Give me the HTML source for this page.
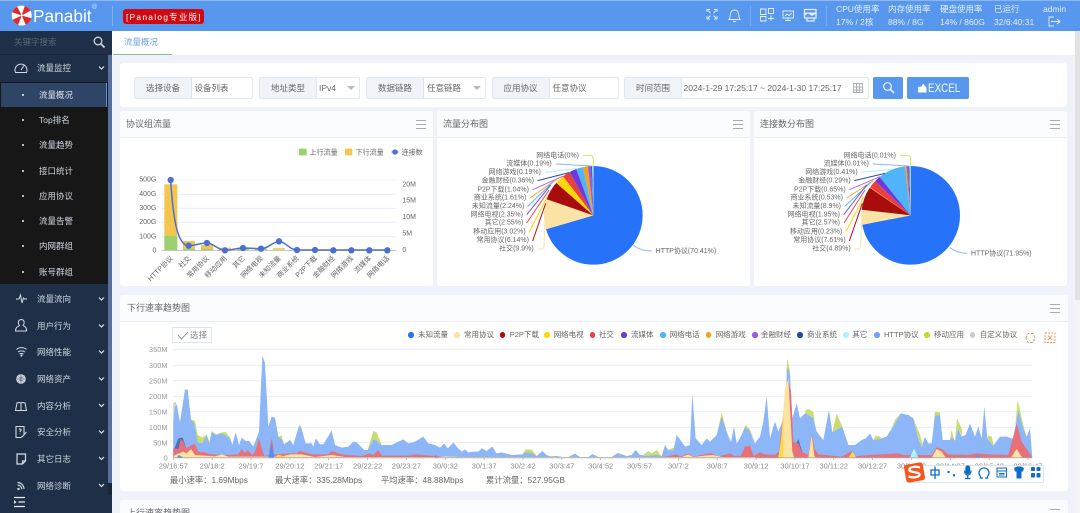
<!DOCTYPE html>
<html lang="zh">
<head>
<meta charset="utf-8">
<title>Panabit</title>
<style>
html,body{margin:0;padding:0;width:1080px;height:513px;overflow:hidden;background:#eff2f8}
body{font-family:"Liberation Sans","Noto Sans CJK SC",sans-serif;font-size:8.5px;color:#666}
#root{position:relative;width:1080px;height:513px;overflow:hidden;filter:blur(.35px)}
.a{position:absolute}
.t{position:absolute;white-space:nowrap;line-height:12px}
.card{position:absolute;background:#fff;border-radius:3px}
.hd{position:absolute;left:0;right:0;top:0;height:26px;background:#fbfcfe;border-bottom:1px solid #e9edf5;border-radius:3px 3px 0 0}
.title{position:absolute;left:6px;top:7px;font-size:9px;line-height:12px;color:#666;white-space:nowrap}
.mn{position:absolute;width:10px;height:9px;top:9px;border-top:1px solid #aaa;border-bottom:1px solid #aaa;box-sizing:border-box}
.mn:after{content:"";position:absolute;left:0;right:0;top:3px;height:1px;background:#aaa}
.box{position:absolute;top:77px;height:22px;box-sizing:border-box;border:1px solid #e0e8f3;background:#fff;border-radius:2px}
.lb{position:absolute;left:0;top:0;bottom:0;background:#f0f4f9;border-right:1px solid #dce6f2;text-align:center;line-height:20px;color:#666}
.vl{position:absolute;top:0;line-height:20px;color:#666;white-space:nowrap}
.car{position:absolute;top:8px;width:0;height:0;border-left:4px solid transparent;border-right:4px solid transparent;border-top:4px solid #b5bac2}
.st{color:#e6effc;font-size:8.5px}
.m{color:#cfd6e0;font-size:8.5px}
.dot{position:absolute;width:2px;height:2px;border-radius:50%;background:#eee}
.leg{position:absolute;top:329px;font-size:7.5px;line-height:12px;color:#666;white-space:nowrap}
.ld{position:absolute;width:5.5px;height:5.5px;border-radius:50%;top:332px}
</style>
</head>
<body>
<div id="root">

<!-- top bar -->
<div class="a" style="left:0;top:0;width:1080px;height:31px;background:#5797ee;border-top:1px solid #8fb7ec;box-sizing:border-box"></div>
<!-- tab row -->
<div class="a" style="left:112px;top:31px;width:963px;height:24px;background:#fff"></div>
<div class="a" style="left:113px;top:54px;width:59px;height:1px;background:#7cc48f"></div>
<div class="t" style="left:124px;top:36px;color:#6fa3e8;font-size:8.5px">流量概况</div>
<div class="a" style="left:1075px;top:31px;width:5px;height:482px;background:#f3f3f3"></div>
<div class="a" style="left:1075px;top:31px;width:5px;height:269px;background:#e2e2e2"></div>

<!-- logo -->
<svg class="a" style="left:0;top:0" width="112" height="31" viewBox="0 0 112 31">
  <circle cx="21.700" cy="15.500" r="10" fill="#fff"/>
  <circle cx="21.700" cy="15.500" r="5" fill="none" stroke="#e3282c" stroke-width="10" pathLength="8" stroke-dasharray="1 1" transform="rotate(22.500 21.700 15.500)"/>
  <circle cx="21.700" cy="15.500" r="1.200" fill="#fff"/>
</svg>
<div class="t" style="left:33px;top:6px;font-size:17.300px;line-height:20px;color:#fff">Panabit</div>
<div class="t" style="left:92px;top:3px;font-size:7px;color:#dce9fb;line-height:10px">®</div>
<div class="a" style="left:112px;top:6px;width:1px;height:20px;background:#7fb0f2"></div>
<div class="a" style="left:123px;top:9px;width:81px;height:15px;background:#cf0a13;border-radius:3px"></div>
<div class="t" style="left:126px;top:10.500px;color:#fff;font-size:8.500px;letter-spacing:1.200px">[Panalog专业版]</div>

<!-- top right stats -->
<div class="t st" style="left:836px;top:3px">CPU使用率</div>
<div class="t st" style="left:836px;top:16px">17% / 2核</div>
<div class="t st" style="left:888px;top:3px">内存使用率</div>
<div class="t st" style="left:888px;top:16px">88% / 8G</div>
<div class="t st" style="left:940px;top:3px">硬盘使用率</div>
<div class="t st" style="left:940px;top:16px">14% / 860G</div>
<div class="t st" style="left:994px;top:3px">已运行</div>
<div class="t st" style="left:994px;top:16px">32/6:40:31</div>
<div class="t st" style="left:1043px;top:3px">admin</div>
<svg class="a" style="left:700px;top:0" width="380" height="31" viewBox="700 0 380 31" fill="none" stroke="#e6effc" stroke-width=".9">
  <path d="M707 12V9.500H710M714 9.500H717V12M707 16V19H710M714 19H717V16M708 10.500L710.500 13M716 10.500L713.500 13M708 18L710.500 15.500M716 18L713.500 15.500"/>
  <path d="M729 19.500C730.500 18 730 15 730.500 13.500C731 11 732.500 10 734.500 10C736.500 10 738 11 738.500 13.500C739 15 738.500 18 740 19.500ZM733 21C733.500 22 735.500 22 736 21"/>
  <path d="M750.500 6V26" stroke="#7fb0f2"/>
  <path d="M760.500 9H766V14.500H760.500ZM768.500 8.500H773.500V13.500H768.500ZM760.500 16.500H766V21H760.500ZM771 15.500V21M768 18.500H774"/>
  <path d="M783 11H793.500V18H783ZM788 18V20.500M785 20.500H791M785 16L787 14L789 15.500L792 13"/>
  <path d="M804.500 9.500H816V18H804.500ZM807 18H814V21H807Z" stroke-width="1.300"/>
  <path d="M805 12.500H815.500V14L812 16L808 13.500L805 15.500Z" fill="#e6effc" stroke="none"/>
  <path d="M826.500 6V26" stroke="#7fb0f2"/>
  <path d="M1054 18H1049V27H1054M1051 22.500H1060M1057 20L1060 22.500L1057 25" transform="translate(0 -1)"/>
</svg>

<!-- sidebar -->
<div class="a" style="left:0;top:31px;width:112px;height:482px;background:#1f2f47"></div>
<div class="a" style="left:0;top:54px;width:108px;height:1px;background:#1a2739"></div>
<div class="a" style="left:108px;top:55px;width:4px;height:428px;background:#566f9b"></div>
<div class="a" style="left:108px;top:483px;width:4px;height:12px;background:#1a2536"></div>
<div class="a" style="left:0;top:82px;width:108px;height:202px;background:#171717"></div>
<div class="a" style="left:1px;top:83px;width:106px;height:24px;background:#2e4566;border-right:1px solid #5797ee;box-sizing:border-box"></div>
<div class="t" style="left:14px;top:36px;color:#5a6779;font-size:8.5px">关键字搜索</div>
<svg class="a" style="left:92px;top:35px" width="14" height="14" fill="none" stroke="#cfd6df" stroke-width="1.300"><circle cx="6" cy="6" r="3.800"/><path d="M9 9L12.500 12.500" stroke-width="1.800"/></svg>

<div class="t m" style="left:37px;top:62px">流量监控</div>
<div class="t m" style="left:39px;top:89px;color:#dde3ea">流量概况</div>
<div class="t m" style="left:39px;top:114px">Top排名</div>
<div class="t m" style="left:39px;top:139px">流量趋势</div>
<div class="t m" style="left:39px;top:165px">接口统计</div>
<div class="t m" style="left:39px;top:190px">应用协议</div>
<div class="t m" style="left:39px;top:215px">流量告警</div>
<div class="t m" style="left:39px;top:240px">内网群组</div>
<div class="t m" style="left:39px;top:266px">账号群组</div>
<div class="dot" style="top:94px;left:21.500px"></div>
<div class="dot" style="top:119px;left:21.500px"></div>
<div class="dot" style="top:144px;left:21.500px"></div>
<div class="dot" style="top:170px;left:21.500px"></div>
<div class="dot" style="top:195px;left:21.500px"></div>
<div class="dot" style="top:220px;left:21.500px"></div>
<div class="dot" style="top:245px;left:21.500px"></div>
<div class="dot" style="top:271px;left:21.500px"></div>

<div class="t m" style="left:37px;top:293px">流量流向</div>
<div class="t m" style="left:37px;top:320px">用户行为</div>
<div class="t m" style="left:37px;top:346px">网络性能</div>
<div class="t m" style="left:37px;top:373px">网络资产</div>
<div class="t m" style="left:37px;top:400px">内容分析</div>
<div class="t m" style="left:37px;top:426px">安全分析</div>
<div class="t m" style="left:37px;top:453px">其它日志</div>
<div class="t m" style="left:37px;top:480px">网络诊断</div>

<svg class="a" style="left:0;top:0" width="112" height="513" viewBox="0 0 112 513" fill="none" stroke="#d5dae2" stroke-width="1">
  <path d="M15.500 72.500A6 6 0 1 1 26.500 72.500ZM21 70L24 65.500"/>
  <path d="M16 299H19L20.500 295L22 303L23.500 298L24.500 299H27"/>
  <path d="M15.500 331C15.500 327 18 326.500 19.500 325.500C17.500 323 18 320 21 319.500C24.500 319.500 25 323 23 325.500C24.500 326.500 27 327 26.500 331Z"/>
  <path d="M16.500 349.500C19 347 24 347 26.500 349.500M18 352C20 350.500 23 350.500 25 352M19.500 354C20.500 353.300 22.500 353.300 23.500 354"/>
  <circle cx="21.500" cy="355.500" r=".6" fill="#d5dae2"/>
  <circle cx="21" cy="379" r="4.800" fill="#d5dae2" stroke="none"/>
  <path d="M17 379H25M21 375V383M18.500 376.500C20 378 22 378 23.500 376.500M18.500 381.500C20 380 22 380 23.500 381.500" stroke="#1f2f47" stroke-width=".5"/>
  <path d="M15.500 410.500L17 403C19 402 20.500 402.500 21 403.500C21.500 402.500 23 402 25 403L26.500 410.500ZM21 403.500V410.500"/>
  <path d="M16 426.500H24V435L21 437.500H16ZM19 429.500C20 428.500 21.500 429 21 430.500C20.500 431 20 431 20 432M20 433.500V434M22 437L26.500 432" stroke-width="1.100"/>
  <path d="M17 454H25.500V461L22.500 464H17ZM22.500 464V461H25.500" stroke-width="1.200"/>
  <path d="M17.500 482.500C21 482.500 24 485.500 24 489M17.500 485C19.800 485 21.800 487 21.800 489.300" stroke-width="1.200"/>
  <circle cx="18.500" cy="489" r="1.200" fill="#d5dae2" stroke="none"/>
  <path d="M99 66.500L101.500 69L104 66.500M99 297.500L101.500 300L104 297.500M99 324.500L101.500 327L104 324.500M99 350.500L101.500 353L104 350.500M99 377.500L101.500 380L104 377.500M99 404L101.500 406.500L104 404M99 430.500L101.500 433L104 430.500M99 457L101.500 459.500L104 457M99 484L101.500 486.500L104 484" stroke="#e0e4ea" stroke-width="1.200"/>
  <path d="M14 497.500H25M18.500 502H25M14 506.500H25" stroke="#e8ecf2" stroke-width="1.300"/>
  <path d="M14 500L16.500 502L14 504Z" fill="#e8ecf2" stroke="none"/>
</svg>

<!-- filter card -->
<div class="card" style="left:120px;top:63px;width:947px;height:44px"></div>
<div class="box" style="left:134px;width:119px"><div class="lb" style="width:56px">选择设备</div><div class="vl" style="left:59.500px">设备列表</div></div>
<div class="box" style="left:259px;width:101px"><div class="lb" style="width:56px">地址类型</div><div class="vl" style="left:59px">IPv4</div><div class="car" style="left:87px"></div></div>
<div class="box" style="left:366px;width:120px"><div class="lb" style="width:56px">数据链路</div><div class="vl" style="left:60px">任意链路</div><div class="car" style="left:106px"></div></div>
<div class="box" style="left:491.500px;width:127px"><div class="lb" style="width:56px">应用协议</div><div class="vl" style="left:60px">任意协议</div></div>
<div class="box" style="left:624px;width:245px"><div class="lb" style="width:56px">时间范围</div><div class="vl" style="left:58.500px;font-size:8.500px">2024-1-29 17:25:17 ~ 2024-1-30 17:25:17</div></div>
<svg class="a" style="left:852px;top:82px" width="12" height="12" fill="none" stroke="#a9adb3"><path d="M1.500 1.500H10.500V10.500H1.500ZM4.500 2V10M7.500 2V10M2 5H10M2 8H10" stroke-width=".9"/></svg>
<div class="a" style="left:873px;top:77px;width:30px;height:21.500px;background:#5797ee;border-radius:2px"></div>
<svg class="a" style="left:882px;top:81px" width="13" height="13" fill="none" stroke="#eaf2fd" stroke-width="1.200"><circle cx="5.500" cy="5.500" r="3.800"/><path d="M8.500 8.500L12 12" stroke-width="1.600"/></svg>
<div class="a" style="left:907px;top:77px;width:62px;height:21.500px;background:#5797ee;border-radius:2px"></div>
<svg class="a" style="left:917px;top:82px" width="11" height="12"><path d="M1 5L4.500 4.500L6 1.500L8 4L9.500 5.500V10.500H1Z" fill="#fff"/></svg>
<div class="t" style="left:927.500px;top:81px;font-size:12px;line-height:14px;color:#fff;transform:scaleX(.82);transform-origin:left center">EXCEL</div>

<!-- panels -->
<div class="card" style="left:120px;top:111px;width:313px;height:175px"><div class="hd"></div><div class="title">协议组流量</div><div class="mn" style="left:296px"></div></div>
<div class="card" style="left:437px;top:111px;width:313px;height:175px"><div class="hd"></div><div class="title">流量分布图</div><div class="mn" style="left:296px"></div></div>
<div class="card" style="left:754px;top:111px;width:313px;height:175px"><div class="hd"></div><div class="title">连接数分布图</div><div class="mn" style="left:296px"></div></div>
<div class="card" style="left:120px;top:295px;width:948px;height:196px"><div class="hd"></div><div class="title" style="left:7px">下行速率趋势图</div><div class="mn" style="left:930px"></div></div>
<div class="card" style="left:120px;top:500px;width:948px;height:30px"><div class="hd" style="background:#fbfcfe"></div><div class="title" style="left:7px">上行速率趋势图</div><div class="mn" style="left:930px"></div></div>

<!-- charts -->
<svg class="a" style="left:0;top:0" width="1080" height="513" viewBox="0 0 1080 513" font-family="'Liberation Sans','Noto Sans CJK SC',sans-serif">
 <g transform="translate(115 140) scale(.33333)" font-size="21" fill="#666">
  <path d="M140 120H845M140 163H845M140 205H845M140 247H845M140 290H845" stroke="#e8ecf7" stroke-width="2.500"/>
  <rect x="148" y="288" width="39" height="43" fill="#9ccf6f"/><rect x="148" y="133" width="39" height="155" fill="#f5c64f"/>
  <rect x="204" y="325" width="36" height="6" fill="#9ccf6f"/><rect x="204" y="303" width="36" height="22" fill="#f5c64f"/>
  <rect x="258" y="327" width="37" height="4" fill="#9ccf6f"/><rect x="258" y="315" width="37" height="12" fill="#f5c64f"/>
  <rect x="312" y="323" width="36" height="8" fill="#f5c64f"/>
  <rect x="366" y="326" width="36" height="5" fill="#9ccf6f"/>
  <rect x="420" y="326" width="36" height="5" fill="#9ccf6f"/>
  <rect x="474" y="324" width="36" height="7" fill="#f5cf78"/>
  <path d="M140 331.500H845" stroke="#b5b5b5" stroke-width="2.500"/>
  <path d="M167 120C175 250 190 317 221 317C240 317 255 309 276 309C295 309 310 331 330 331C350 331 365 324 384 324C405 324 420 326 438 326C460 326 475 304 492 304C510 304 525 330 546 330H817" fill="none" stroke="#4e6fd2" stroke-width="4.500"/>
  <g fill="#4e6fd2"><circle cx="167" cy="120" r="9.500"/><circle cx="221" cy="317" r="9.500"/><circle cx="276" cy="309" r="9.500"/><circle cx="330" cy="331" r="9.500"/><circle cx="384" cy="324" r="9.500"/><circle cx="438" cy="326" r="9.500"/><circle cx="492" cy="304" r="9.500"/><circle cx="546" cy="330" r="9.500"/><circle cx="600" cy="330" r="9.500"/><circle cx="655" cy="331" r="9.500"/><circle cx="709" cy="331" r="9.500"/><circle cx="763" cy="331" r="9.500"/><circle cx="817" cy="331" r="9.500"/></g>
  <g text-anchor="end"><text x="124" y="125">500G</text><text x="124" y="168">400G</text><text x="124" y="210">300G</text><text x="124" y="252">200G</text><text x="124" y="295">100G</text><text x="124" y="337">0</text></g>
  <text x="862" y="140">20M</text><text x="862" y="188">15M</text><text x="862" y="237">10M</text><text x="862" y="286">5M</text><text x="862" y="336">0</text>
  <g text-anchor="end">
   <text transform="translate(175 356) rotate(-45)">HTTP协议</text>
   <text transform="translate(229 356) rotate(-45)">社交</text>
   <text transform="translate(283 356) rotate(-45)">常用协议</text>
   <text transform="translate(337 356) rotate(-45)">移动应用</text>
   <text transform="translate(391 356) rotate(-45)">其它</text>
   <text transform="translate(445 356) rotate(-45)">网络电视</text>
   <text transform="translate(499 356) rotate(-45)">未知流量</text>
   <text transform="translate(553 356) rotate(-45)">商业系统</text>
   <text transform="translate(607 356) rotate(-45)">P2P下载</text>
   <text transform="translate(661 356) rotate(-45)">金融财经</text>
   <text transform="translate(716 356) rotate(-45)">网络游戏</text>
   <text transform="translate(770 356) rotate(-45)">流媒体</text>
   <text transform="translate(824 356) rotate(-45)">网络电话</text>
  </g>
  <rect x="552" y="26" width="23" height="20" rx="3" fill="#9ccf6f"/><text x="584" y="43">上行流量</text>
  <rect x="690" y="26" width="22" height="20" rx="3" fill="#f5c64f"/><text x="722" y="43">下行流量</text>
  <path d="M830 36H850" stroke="#4e6fd2" stroke-width="4"/><circle cx="840" cy="36" r="8" fill="#4e6fd2"/><text x="860" y="43">连接数</text>
 </g>

 <!-- pie 1 -->
 <g transform="translate(435 140) scale(.33333)" font-size="21" fill="#666">
  <g fill="none" stroke-width="148" transform="rotate(-90 475 226)">
   <circle cx="475" cy="226" r="74" pathLength="100" stroke="#2672f8" stroke-dasharray="70.41 100"/>
   <circle cx="475" cy="226" r="74" pathLength="100" stroke="#fae3a4" stroke-dasharray="9.9 100" stroke-dashoffset="-70.41"/>
   <circle cx="475" cy="226" r="74" pathLength="100" stroke="#a80c0c" stroke-dasharray="6.14 100" stroke-dashoffset="-80.31"/>
   <circle cx="475" cy="226" r="74" pathLength="100" stroke="#ffd60a" stroke-dasharray="3.02 100" stroke-dashoffset="-86.45"/>
   <circle cx="475" cy="226" r="74" pathLength="100" stroke="#e8403f" stroke-dasharray="2.55 100" stroke-dashoffset="-89.47"/>
   <circle cx="475" cy="226" r="74" pathLength="100" stroke="#6a3ae0" stroke-dasharray="2.35 100" stroke-dashoffset="-92.02"/>
   <circle cx="475" cy="226" r="74" pathLength="100" stroke="#4fb4fa" stroke-dasharray="2.24 100" stroke-dashoffset="-94.37"/>
   <circle cx="475" cy="226" r="74" pathLength="100" stroke="#f2a31a" stroke-dasharray="1.61 100" stroke-dashoffset="-96.61"/>
   <circle cx="475" cy="226" r="74" pathLength="100" stroke="#9a5ae0" stroke-dasharray="1.04 100" stroke-dashoffset="-98.22"/>
   <circle cx="475" cy="226" r="74" pathLength="100" stroke="#1f4aa0" stroke-dasharray=".36 100" stroke-dashoffset="-99.26"/>
   <circle cx="475" cy="226" r="74" pathLength="100" stroke="#aef2ff" stroke-dasharray=".38 100" stroke-dashoffset="-99.62"/>
  </g>
  <g fill="none" stroke-width="3">
   <path d="M444 46H465Q475 46 475 60V78" stroke="#d4e36a"/>
   <path d="M362 72L472 78" stroke="#8ab8f8"/>
   <path d="M332 97L425 85" stroke="#aef2ff"/>
   <path d="M308 122L402 98" stroke="#2c4f9e"/>
   <path d="M293 149L385 108" stroke="#b070e8"/>
   <path d="M285 174L365 118" stroke="#f0a63c"/>
   <path d="M278 199L355 125" stroke="#5ab8f8"/>
   <path d="M275 224L347 135" stroke="#7a50e0"/>
   <path d="M275 249L342 150" stroke="#e84a50"/>
   <path d="M283 275L337 170" stroke="#ffd500"/>
   <path d="M293 303L332 190" stroke="#b01015"/>
   <path d="M308 327H322L327 320L330 240" stroke="#fbe3a8"/>
   <path d="M595 315Q615 333 650 333" stroke="#8ab8f8"/>
  </g>
  <g text-anchor="end">
   <text x="432" y="52">网络电话(0%)</text><text x="350" y="77">流媒体(0.19%)</text><text x="318" y="102">网络游戏(0.19%)</text><text x="297" y="127">金融财经(0.36%)</text><text x="282" y="154">P2P下载(1.04%)</text><text x="274" y="179">商业系统(1.61%)</text><text x="268" y="204">未知流量(2.24%)</text><text x="264" y="229">网络电视(2.35%)</text><text x="265" y="254">其它(2.55%)</text><text x="272" y="280">移动应用(3.02%)</text><text x="282" y="306">常用协议(6.14%)</text><text x="296" y="332">社交(9.9%)</text>
  </g>
  <text x="662" y="339">HTTP协议(70.41%)</text>
 </g>

 <!-- pie 2 -->
 <g transform="translate(750 140) scale(.33333)" font-size="21" fill="#666">
  <g fill="none" stroke-width="148" transform="rotate(-90 482 226)">
   <circle cx="482" cy="226" r="74" pathLength="100" stroke="#2672f8" stroke-dasharray="71.95 100"/>
   <circle cx="482" cy="226" r="74" pathLength="100" stroke="#fae3a4" stroke-dasharray="4.89 100" stroke-dashoffset="-71.95"/>
   <circle cx="482" cy="226" r="74" pathLength="100" stroke="#a80c0c" stroke-dasharray="7.61 100" stroke-dashoffset="-76.84"/>
   <circle cx="482" cy="226" r="74" pathLength="100" stroke="#f2a31a" stroke-dasharray=".23 100" stroke-dashoffset="-84.45"/>
   <circle cx="482" cy="226" r="74" pathLength="100" stroke="#e8403f" stroke-dasharray="2.57 100" stroke-dashoffset="-84.68"/>
   <circle cx="482" cy="226" r="74" pathLength="100" stroke="#6a3ae0" stroke-dasharray="1.95 100" stroke-dashoffset="-87.25"/>
   <circle cx="482" cy="226" r="74" pathLength="100" stroke="#4fb4fa" stroke-dasharray="8.9 100" stroke-dashoffset="-89.2"/>
   <circle cx="482" cy="226" r="74" pathLength="100" stroke="#f2a31a" stroke-dasharray=".53 100" stroke-dashoffset="-98.1"/>
   <circle cx="482" cy="226" r="74" pathLength="100" stroke="#9a5ae0" stroke-dasharray=".65 100" stroke-dashoffset="-98.63"/>
   <circle cx="482" cy="226" r="74" pathLength="100" stroke="#1f4aa0" stroke-dasharray=".29 100" stroke-dashoffset="-99.28"/>
   <circle cx="482" cy="226" r="74" pathLength="100" stroke="#aef2ff" stroke-dasharray=".43 100" stroke-dashoffset="-99.57"/>
  </g>
  <g fill="none" stroke-width="3">
   <path d="M450 46H472Q482 46 482 60V78" stroke="#d4e36a"/>
   <path d="M368 72L478 78" stroke="#8ab8f8"/>
   <path d="M336 97L430 87" stroke="#aef2ff"/>
   <path d="M313 122L405 100" stroke="#2c4f9e"/>
   <path d="M298 149L390 110" stroke="#b070e8"/>
   <path d="M290 174L370 122" stroke="#f0a63c"/>
   <path d="M284 199L362 128" stroke="#5ab8f8"/>
   <path d="M281 224L350 135" stroke="#7a50e0"/>
   <path d="M282 249L345 150" stroke="#e84a50"/>
   <path d="M288 275L342 170" stroke="#ffd500"/>
   <path d="M298 303L337 190" stroke="#b01015"/>
   <path d="M313 327H327L332 320L335 240" stroke="#fbe3a8"/>
   <path d="M600 323Q620 340 652 340" stroke="#8ab8f8"/>
  </g>
  <g text-anchor="end">
   <text x="438" y="52">网络电话(0.01%)</text><text x="357" y="77">流媒体(0.01%)</text><text x="323" y="102">网络游戏(0.41%)</text><text x="302" y="127">金融财经(0.29%)</text><text x="287" y="154">P2P下载(0.65%)</text><text x="279" y="179">商业系统(0.53%)</text><text x="273" y="204">未知流量(8.9%)</text><text x="270" y="229">网络电视(1.95%)</text><text x="270" y="254">其它(2.57%)</text><text x="277" y="280">移动应用(0.23%)</text><text x="287" y="306">常用协议(7.61%)</text><text x="302" y="332">社交(4.89%)</text>
  </g>
  <text x="663" y="346">HTTP协议(71.95%)</text>
 </g>

 <!-- trend chart grid -->
 <path d="M173 349.300H1032M173 365.300H1032M173 380.700H1032M173 396.300H1032M173 411.700H1032M173 427.300H1032M173 442.300H1032" stroke="#e8ecf7" stroke-width=".9"/>

 <!-- trend segment 1 -->
 <g transform="translate(115 295) scale(.33333)">
  <polygon fill="#c9dc70" points="175,488 175,325 182,320 195,380 210,283 218,283 228,373 240,378 248,420 262,428 275,418 283,440 290,408 303,418 318,413 332,411 345,428 352,450 352,488"/>
  <polygon fill="#cfd3d8" points="175,488 175,330 180,322 186,340 186,488"/>
  <polygon fill="#8cb6f8" points="175,488 175,380 180,335 186,330 195,385 210,285 218,285 228,375 238,385 248,442 262,445 275,420 283,447 290,412 303,420 318,415 330,420 345,430 352,450 362,412 372,450 380,428 392,438 402,438 415,455 432,410 442,182 450,205 460,395 470,365 480,368 490,425 500,430 507,448 525,435 535,450 552,392 558,395 572,445 590,445 595,455 603,430 615,448 625,448 650,407 660,450 680,458 700,455 715,440 725,442 748,465 758,465 775,432 785,437 800,450 830,450 850,440 865,433 880,445 900,440 925,425 940,445 960,450 960,488"/>
  <polygon fill="#c9dc70" points="490,425 500,422 507,448 500,432"/>
  <polygon fill="#c9dc70" points="548,405 552,390 558,393 552,398"/>
  <polygon fill="#c9dc70" points="758,465 775,408 785,412 800,450 785,437 775,432"/>
  <polygon fill="#4a70b8" points="175,470 178,462 190,430 203,428 213,458 210,480 180,480"/>
  <polygon fill="#e8707a" points="175,488 175,460 190,462 197,432 205,440 213,460 230,450 240,447 250,470 270,472 285,478 300,478 330,480 370,478 380,462 390,475 398,465 412,480 420,470 432,430 442,465 448,483 470,480 480,478 520,475 545,475 555,468 590,478 640,478 650,468 680,478 740,483 765,475 775,480 790,465 800,482 850,482 880,482 900,478 960,483 960,488"/>
  <polygon fill="#fbe3a0" points="175,488 180,480 205,470 215,475 228,462 240,480 300,484 320,478 340,485 500,485 525,478 560,478 600,486 650,480 690,486 960,486 960,488"/>
  <polygon fill="#ffd84a" points="480,488 490,478 505,484 520,488"/>
  <polygon fill="#e8707a" points="462,470 470,430 477,470"/>
  <polygon fill="#5090f0" points="460,488 470,445 478,488"/>
  <polygon fill="#5090f0" points="185,488 192,480 205,488"/>
 </g>

 <!-- trend segment 2 -->
 <g transform="translate(435 295) scale(.33333)">
  <polygon fill="#c9dc70" points="264,476 272,463 290,464 305,483 290,480 270,478"/>
  <polygon fill="#c9dc70" points="625,480 640,468 650,475 665,465 680,484 650,482"/>
  <polygon fill="#c9dc70" points="700,465 715,458 722,470 716,468"/>
  <polygon fill="#8cb6f8" points="0,488 0,450 15,458 28,445 38,460 55,443 70,460 80,470 90,463 100,472 115,470 130,470 140,460 155,468 172,455 185,475 200,472 230,480 262,478 270,472 290,474 305,483 322,468 335,480 345,484 365,483 385,486 400,486 420,476 435,486 460,486 472,477 490,486 530,486 548,474 575,483 590,480 602,465 615,480 640,482 665,480 680,484 690,450 700,465 715,466 725,420 740,440 750,455 765,450 772,295 782,430 800,450 815,430 825,440 845,420 860,362 880,425 888,440 897,395 905,445 915,430 932,392 945,410 960,445 960,488"/>
  <polygon fill="#c9dc70" points="845,420 860,352 875,410 888,440 880,425 860,366"/>
  <polygon fill="#c9dc70" points="925,405 932,390 945,403 960,440 945,410 932,396"/>
  <polygon fill="#e8707a" points="0,488 0,480 10,484 30,486 200,486 680,487 725,478 735,484 760,475 775,484 810,478 830,474 850,484 885,475 900,484 918,482 930,455 945,452 955,480 960,485 960,488"/>
  <polygon fill="#fbe3a0" points="0,488 30,484 80,486 740,486 760,478 775,486 810,482 835,480 860,486 905,486 960,486 960,488"/>
 </g>

 <!-- trend segment 3 -->
 <g transform="translate(755 295) scale(.33333)">
  <polygon fill="#8cb6f8" points="0,488 0,445 15,425 25,380 35,305 45,430 55,395 60,380 70,410 80,385 90,350 97,205 105,240 112,370 125,325 135,370 150,355 162,360 175,370 185,410 205,435 222,345 232,412 248,402 262,395 280,450 300,450 320,435 332,430 345,415 355,435 375,432 395,425 420,385 437,355 460,360 475,370 490,430 500,455 510,425 520,445 530,445 540,362 555,360 563,435 585,435 590,425 600,437 610,400 620,425 632,420 645,385 660,425 670,395 680,430 688,335 697,430 715,452 735,425 755,425 775,432 790,345 805,400 815,425 825,400 832,488"/>
  <polygon fill="#c9dc70" points="93,240 97,190 105,230 106,250 100,215"/>
  <polygon fill="#c9dc70" points="150,355 153,344 162,343 175,350 180,385 175,370 162,360"/>
  <polygon fill="#c9dc70" points="232,412 245,355 262,395 248,402"/>
  <polygon fill="#c9dc70" points="355,435 362,422 375,425 380,430 375,432"/>
  <polygon fill="#c9dc70" points="408,405 420,375 437,355 420,385"/>
  <polygon fill="#c9dc70" points="475,370 495,420 505,455 500,455 490,430"/>
  <polygon fill="#c9dc70" points="530,445 540,350 555,352 555,360 540,362"/>
  <polygon fill="#c9dc70" points="585,435 590,405 598,437 590,425"/>
  <polygon fill="#c9dc70" points="600,437 606,370 620,400 622,424 610,400"/>
  <polygon fill="#c9dc70" points="697,430 700,422 710,425 717,452 715,452"/>
  <polygon fill="#c9dc70" points="780,400 788,315 805,390 815,425 805,400 790,345"/>
  <polygon fill="#4a70b8" points="122,450 130,432 142,472 130,478"/>
  <polygon fill="#e8707a" points="0,488 0,480 15,472 30,478 60,480 72,470 85,350 97,250 108,290 115,440 125,445 130,445 140,470 160,480 170,415 178,460 190,478 230,482 260,485 290,468 300,484 340,480 375,478 430,475 445,480 530,480 545,457 560,462 580,478 640,480 665,475 700,478 760,480 785,385 800,440 820,470 832,488"/>
  <polygon fill="#fbe3a0" points="70,488 78,440 90,280 100,250 112,470 118,488"/>
  <polygon fill="#ffd84a" points="70,488 80,420 86,350 84,488"/>
  <polygon fill="#fbe3a0" points="160,488 170,420 178,482 182,488"/>
  <polygon fill="#fbe3a0" points="530,488 545,462 560,470 572,488"/>
  <polygon fill="#fbe3a0" points="768,488 785,462 802,488"/>
  <polygon fill="#ffd84a" points="280,488 293,470 303,488"/>
  <polygon fill="#aef2ff" points="465,488 477,460 490,488"/>
  <polygon fill="#5090f0" points="660,488 668,480 680,488"/>
 </g>

 <!-- axes -->
 <path d="M173 457.800H1032" stroke="#aaa" stroke-width=".9"/>
 <path d="M173.300 458V460M212.200 458V460M251 458V460M289.900 458V460M328.700 458V460M367.600 458V460M406.400 458V460M445.300 458V460M484.100 458V460M523 458V460M561.800 458V460M600.700 458V460M639.500 458V460M678.400 458V460M717.200 458V460M756.100 458V460M794.900 458V460M833.800 458V460M872.600 458V460M911.500 458V460M950.300 458V460M989.200 458V460M1028 458V460" stroke="#aaa" stroke-width=".7"/>
 <g font-size="7.500" fill="#999" text-anchor="end">
  <text x="167.700" y="352">350M</text><text x="167.700" y="367.800">300M</text><text x="167.700" y="383.500">250M</text><text x="167.700" y="399">200M</text><text x="167.700" y="414.500">150M</text><text x="167.700" y="430">100M</text><text x="167.700" y="445.500">50M</text><text x="167.700" y="460.500">0</text>
 </g>
 <g font-size="7.500" fill="#888" text-anchor="middle">
  <text x="173.300" y="468.500">29/16:57</text><text x="212.200" y="468.500">29/18:2</text><text x="251" y="468.500">29/19:7</text><text x="289.900" y="468.500">29/20:12</text><text x="328.700" y="468.500">29/21:17</text><text x="367.600" y="468.500">29/22:22</text><text x="406.400" y="468.500">29/23:27</text><text x="445.300" y="468.500">30/0:32</text><text x="484.100" y="468.500">30/1:37</text><text x="523" y="468.500">30/2:42</text><text x="561.800" y="468.500">30/3:47</text><text x="600.700" y="468.500">30/4:52</text><text x="639.500" y="468.500">30/5:57</text><text x="678.400" y="468.500">30/7:2</text><text x="717.200" y="468.500">30/8:7</text><text x="756.100" y="468.500">30/9:12</text><text x="794.900" y="468.500">30/10:17</text><text x="833.800" y="468.500">30/11:22</text><text x="872.600" y="468.500">30/12:27</text><text x="911.500" y="468.500">30/13:32</text><text x="950.300" y="468.500">30/14:37</text><text x="989.200" y="468.500">30/15:42</text><text x="1028" y="468.500">30/16:47</text>
 </g>
 <!-- toolbox -->
 <g fill="none" stroke="#f08a50" stroke-width=".9">
  <path d="M1026 338L1028 333.500H1033L1035 338L1033 342.500H1028Z" stroke-dasharray="2.500 1.500"/>
  <path d="M1045 333H1055V342.500H1045Z" stroke-dasharray="2 1.200"/>
  <path d="M1048 335.500L1052 340M1052 335.500L1048 340"/>
 </g>
</svg>

<!-- select button -->
<div class="a" style="left:172px;top:327px;width:40px;height:16px;box-sizing:border-box;border:1px solid #dce6f2;background:#fff;border-radius:1px"></div>
<svg class="a" style="left:177px;top:331px" width="12" height="9" fill="none" stroke="#888" stroke-width=".9"><path d="M1 4L4.500 8L11 1"/></svg>
<div class="t" style="left:190px;top:329px;font-size:8.5px;color:#888">选择</div>

<!-- legend -->
<div class="ld" style="left:408px;background:#2672f8"></div><div class="leg" style="left:418px">未知流量</div>
<div class="ld" style="left:454px;background:#fae3a4"></div><div class="leg" style="left:464px">常用协议</div>
<div class="ld" style="left:499.500px;background:#a80c0c"></div><div class="leg" style="left:509.700px">P2P下载</div>
<div class="ld" style="left:544px;background:#ffd60a"></div><div class="leg" style="left:553.700px">网络电视</div>
<div class="ld" style="left:589.500px;background:#e8403f"></div><div class="leg" style="left:599px">社交</div>
<div class="ld" style="left:621px;background:#6a3ae0"></div><div class="leg" style="left:631px">流媒体</div>
<div class="ld" style="left:660px;background:#4fb4fa"></div><div class="leg" style="left:669.700px">网络电话</div>
<div class="ld" style="left:705.500px;background:#f2a31a"></div><div class="leg" style="left:715.700px">网络游戏</div>
<div class="ld" style="left:752px;background:#9a5ae0"></div><div class="leg" style="left:761px">金融财经</div>
<div class="ld" style="left:797px;background:#1f4aa0"></div><div class="leg" style="left:807px">商业系统</div>
<div class="ld" style="left:843px;background:#aef2ff"></div><div class="leg" style="left:852.300px">其它</div>
<div class="ld" style="left:874px;background:#6ea4f8"></div><div class="leg" style="left:884px">HTTP协议</div>
<div class="ld" style="left:924px;background:#c4d82e"></div><div class="leg" style="left:934px">移动应用</div>
<div class="ld" style="left:969.500px;background:#c8cccc"></div><div class="leg" style="left:979.700px">自定义协议</div>

<!-- stats -->
<div class="t" style="left:170px;top:474px;font-size:8.300px;color:#666">最小速率：1.69Mbps</div>
<div class="t" style="left:275px;top:474px;font-size:8.300px;color:#666">最大速率：335.28Mbps</div>
<div class="t" style="left:381px;top:474px;font-size:8.300px;color:#666">平均速率：48.88Mbps</div>
<div class="t" style="left:486px;top:474px;font-size:8.300px;color:#666">累计流量：527.95GB</div>

<!-- IME -->
<div class="a" style="left:908px;top:465px;width:136px;height:18px;background:#fff;border:1px solid #d8e4f2;box-sizing:border-box;border-radius:2px"></div>
<svg class="a" style="left:900px;top:460px" width="146" height="26" viewBox="900 460 146 26">
  <rect x="905" y="463.500" width="19" height="18" rx="2.500" fill="#f2571f" transform="rotate(-10 914.500 472.500)"/>
  <path d="M920 467.500C915 466 909 467 909.500 470C910 473 919.500 471.500 919.500 474.500C919.500 477.500 913 478 908.500 476.500" fill="none" stroke="#fff" stroke-width="2.300"/>
  <g fill="none" stroke="#0e6cc8" stroke-width="1.300">
   <path d="M931 470H939V475H931ZM935 466.500V479"/>
   <circle cx="948.500" cy="472" r="1.200" fill="#0e6cc8" stroke="none"/>
   <path d="M954 474V476.500" stroke-width="1.800"/>
   <rect x="966" y="466" width="3.500" height="7.500" rx="1.700" fill="#0e6cc8"/>
   <path d="M964.500 470.500C964.500 476.500 971 476.500 971 470.500M967.700 475.500V478.500M965 478.500H970.500"/>
   <path d="M983 478H980.500V476.500C977.500 473 979.500 468 984 468C988.500 468 990.500 473 987.500 476.500V478H985"/>
   <path d="M997 468H1006.500V477H997ZM997 471H1006.500M999 473.500H1004.500M999 475H1004.500" stroke-width="1"/>
  </g>
  <path d="M1014 468L1017 466.500H1021L1024 468L1023 471.500H1021.500V478.500H1016.500V471.500H1015Z" fill="#0e6cc8"/>
  <g fill="#0e6cc8"><rect x="1031" y="467" width="4" height="4" rx="1"/><rect x="1036.500" y="467" width="4" height="4" rx="1"/><rect x="1031" y="473" width="4" height="4.500" rx="1"/><rect x="1036.500" y="473" width="4" height="4.500" rx="1"/></g>
</svg>

</div>
</body>
</html>
